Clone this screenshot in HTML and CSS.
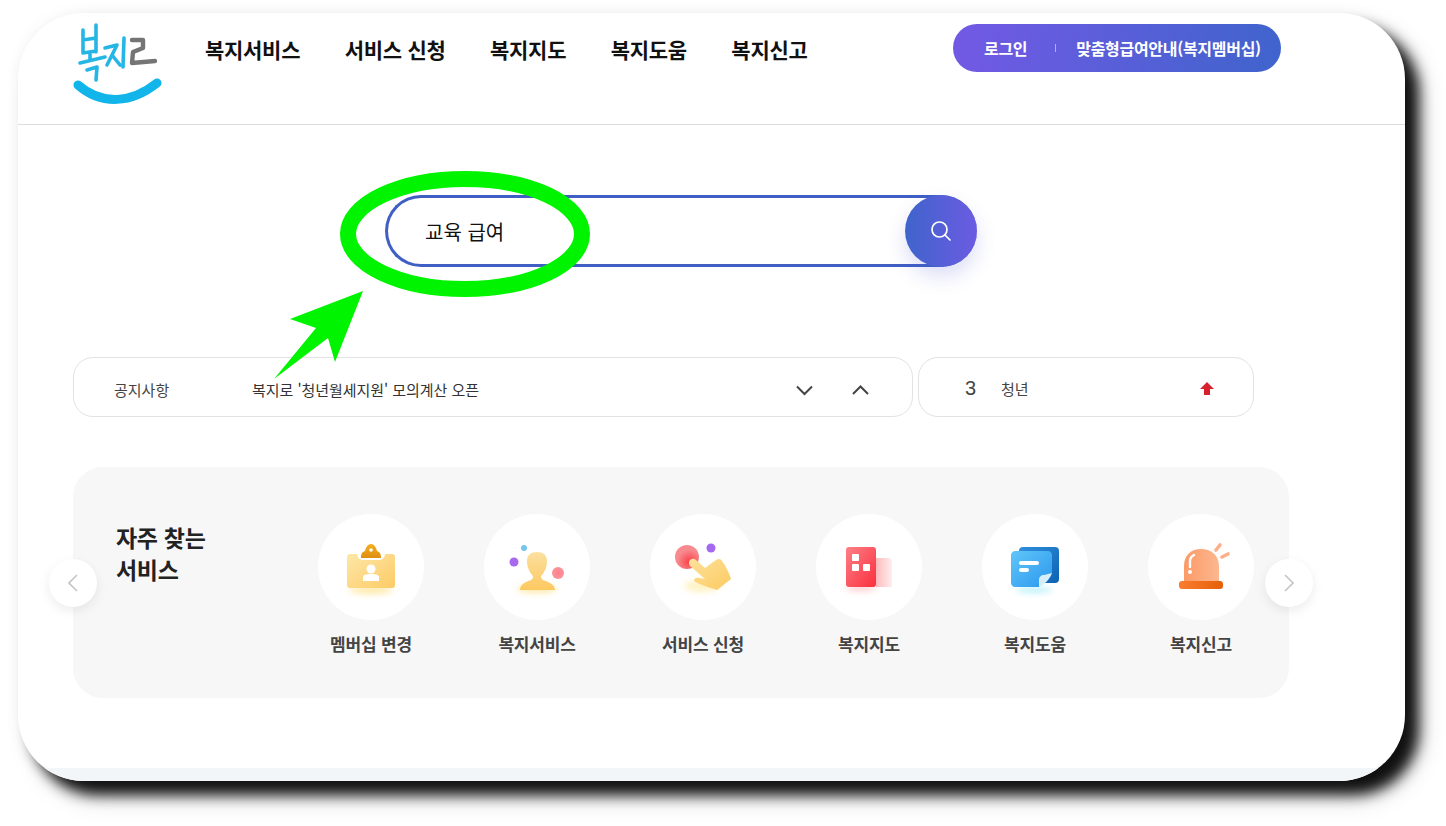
FILE: index.html
```html
<!DOCTYPE html>
<html lang="ko">
<head>
<meta charset="UTF-8">
<meta name="viewport" content="width=device-width, initial-scale=1.0">
<title>복지로</title>
<link rel="stylesheet" href="styles.css">
</head>
<body>
<div class="card">
    <header class="header">
        <a class="logo" href="#">
            <svg width="92" height="82" viewBox="0 0 92 82" fill="none" stroke-linecap="round" stroke-linejoin="round">
                <g stroke="#25b6e6" stroke-width="3.6">
                    <path d="M11 7 L11 30 M24 2 L24 29 M11 17 L24 15 M11 30 L24 28"/>
                    <path d="M18 31 L18 37 M8 40 L33 34 M15 47 L25 44 L24 57"/>
                    <path d="M33 25 L45 22 L35 42 M40 32 L48 42"/>
                    <path d="M52 15 L51 44"/>
                </g>
                <path d="M60 17 L71 17 L71 25 L61 29 L60 40 L83 38" stroke="#757575" stroke-width="4.4"/>
                <path d="M6 62 C30 83 60 80 85 60" stroke="#12b5ea" stroke-width="9"/>
            </svg>
        </a>
        <nav class="nav">
            <a href="#">복지서비스</a>
            <a href="#">서비스 신청</a>
            <a href="#">복지지도</a>
            <a href="#">복지도움</a>
            <a href="#">복지신고</a>
        </nav>
        <div class="member-pill">
            <a href="#">로그인</a>
            <span class="pill-line"></span>
            <a href="#">맞춤형급여안내(복지멤버십)</a>
        </div>
    </header>

    <main class="main">
        <div class="search-row">
            <div class="search-box">
                <span class="search-text">교육 급여</span>
                <button class="search-btn" aria-label="검색">
                    <svg width="22" height="22" viewBox="0 0 22 22" fill="none" stroke="#fff" stroke-width="1.7" stroke-linecap="round">
                        <circle cx="9.5" cy="9.5" r="7.5"/>
                        <path d="M15 15 L20 20"/>
                    </svg>
                </button>
            </div>
        </div>

        <div class="notice-row">
            <div class="notice">
                <span class="notice-label">공지사항</span>
                <span class="notice-text">복지로 '청년월세지원' 모의계산 오픈</span>
                <svg class="notice-arrows" width="76" height="14" viewBox="0 0 76 14" fill="none" stroke="#444" stroke-width="2">
                    <path d="M2 3.5 L9.5 11 L17 3.5"/>
                    <path d="M58 11 L65.5 3.5 L73 11"/>
                </svg>
            </div>
            <div class="rank">
                <span class="rank-num">3</span>
                <span class="rank-word">청년</span>
                <svg class="rank-up" width="14" height="13" viewBox="0 0 14 13">
                    <path d="M7 0 L14 7 L10 7 L10 13 L4 13 L4 7 L0 7 Z" fill="#d9202e"/>
                </svg>
            </div>
        </div>

        <section class="services">
            <h2 class="services-title">자주 찾는<br>서비스</h2>
            <ul class="service-list">
                <li class="service">
                    <span class="service-icon">
                        <svg width="106" height="106" viewBox="0 0 106 106">
                            <defs>
                                <linearGradient id="y1" x1="0" y1="0" x2="1" y2="1"><stop offset="0" stop-color="#fde7a8"/><stop offset="1" stop-color="#fdcb66"/></linearGradient>
                                <linearGradient id="o1" x1="0" y1="0" x2="0" y2="1"><stop offset="0" stop-color="#f3b01e"/><stop offset="1" stop-color="#de8d12"/></linearGradient>
                            </defs>
                            <ellipse class="glow" cx="53" cy="76" rx="22" ry="4" fill="#ffe9a6"/>
                            <rect x="29" y="40" width="48" height="34" rx="3" fill="url(#y1)"/>
                            <path d="M39 39 C39 44 42 46 45 46 L61 46 C64 46 67 44 67 39 Z" fill="#fff"/>
                            <path d="M43 44 C43 40 44 38 47 37 C48 33 50 30 53 30 C56 30 58 33 59 37 C62 38 63 40 63 44 Z" fill="url(#o1)"/>
                            <circle cx="53" cy="36" r="1.8" fill="#fff"/>
                            <circle cx="53" cy="55" r="4.5" fill="#fff"/>
                            <path d="M45 67 L45 63 C45 61 48 60 53 60 C58 60 61 61 61 63 L61 67 Z" fill="#fff"/>
                        </svg>
                    </span>
                    <span class="service-name">멤버십 변경</span>
                </li>
                <li class="service">
                    <span class="service-icon">
                        <svg width="106" height="106" viewBox="0 0 106 106">
                            <defs>
                                <linearGradient id="y2" x1="0" y1="0" x2="0" y2="1"><stop offset="0" stop-color="#fbe09f"/><stop offset="1" stop-color="#fdc860"/></linearGradient>
                                <radialGradient id="r2"><stop offset="0" stop-color="#ff7f8b"/><stop offset="1" stop-color="#f9949c"/></radialGradient>
                            </defs>
                            <ellipse class="glow" cx="53" cy="75" rx="20" ry="4" fill="#ffe9a6"/>
                            <path d="M36 76 C36 70 42 68 47 66 C49 65 49 63 49 62 C45 58 43 52 43 47 C43 41 47 38 53 38 C59 38 63 41 63 47 C63 52 61 58 57 62 C57 63 57 65 59 66 C64 68 71 70 71 76 Z" fill="url(#y2)"/>
                            <circle cx="30" cy="48" r="4.5" fill="#a869ee"/>
                            <circle cx="40" cy="34" r="3" fill="#74c6ec"/>
                            <circle cx="74" cy="59" r="6" fill="url(#r2)"/>
                        </svg>
                    </span>
                    <span class="service-name">복지서비스</span>
                </li>
                <li class="service">
                    <span class="service-icon">
                        <svg width="106" height="106" viewBox="0 0 106 106">
                            <defs>
                                <radialGradient id="r3" cx="0.6" cy="0.7"><stop offset="0" stop-color="#fb3f48"/><stop offset="1" stop-color="#f68a8e"/></radialGradient>
                                <linearGradient id="y3" x1="0" y1="0" x2="1" y2="1"><stop offset="0" stop-color="#fde09a"/><stop offset="1" stop-color="#fccb62"/></linearGradient>
                            </defs>
                            <ellipse class="glow" cx="52" cy="72" rx="18" ry="6" fill="#fff2c4"/>
                            <circle cx="37" cy="43" r="12" fill="url(#r3)"/>
                            <circle cx="61" cy="34" r="4.5" fill="#a468f2"/>
                            <path d="M39 48 C40 44 44 44 46 46 L55 54 L66 46 C69 44 71 45 72 47 C76 52 79 59 81 65 L67 76 C60 74 52 71 45 68 C43 66 45 63 49 64 L55 65 L40 52 C39 51 39 49 39 48 Z" fill="url(#y3)"/>
                        </svg>
                    </span>
                    <span class="service-name">서비스 신청</span>
                </li>
                <li class="service">
                    <span class="service-icon">
                        <svg width="106" height="106" viewBox="0 0 106 106">
                            <defs>
                                <linearGradient id="r4" x1="0" y1="0" x2="1" y2="1"><stop offset="0" stop-color="#fb8087"/><stop offset="1" stop-color="#fb2f3d"/></linearGradient>
                                <linearGradient id="p4" x1="0" y1="0" x2="1" y2="0"><stop offset="0" stop-color="#fdbabd"/><stop offset="1" stop-color="#ffeeee"/></linearGradient>
                            </defs>
                            <ellipse class="glow" cx="45" cy="74" rx="15" ry="3" fill="#ffc9cc"/>
                            <path d="M60 44 L72 44 C75 44 76 46 76 48 L76 73 L60 73 Z" fill="url(#p4)"/>
                            <rect x="30" y="33" width="30" height="40" rx="3" fill="url(#r4)"/>
                            <rect x="36" y="40" width="7" height="7" rx="1" fill="#fff"/>
                            <rect x="36" y="50" width="7" height="7" rx="1" fill="#fff"/>
                            <rect x="47" y="50" width="7" height="7" rx="1" fill="#fff"/>
                        </svg>
                    </span>
                    <span class="service-name">복지지도</span>
                </li>
                <li class="service">
                    <span class="service-icon">
                        <svg width="106" height="106" viewBox="0 0 106 106">
                            <defs>
                                <linearGradient id="b5" x1="0" y1="0" x2="1" y2="1"><stop offset="0" stop-color="#62c6f9"/><stop offset="1" stop-color="#2a97ee"/></linearGradient>
                                <linearGradient id="d5" x1="0" y1="0" x2="1" y2="1"><stop offset="0" stop-color="#2e8fdc"/><stop offset="1" stop-color="#0e62b3"/></linearGradient>
                            </defs>
                            <ellipse class="glow" cx="52" cy="76" rx="18" ry="3" fill="#b9f0f8"/>
                            <rect x="37" y="33" width="40" height="36" rx="4" fill="url(#d5)"/>
                            <path d="M33 37 L66 37 C68 37 70 39 70 41 L70 59 L57 73 L33 73 C31 73 29 71 29 69 L29 41 C29 39 31 37 33 37 Z" fill="url(#b5)"/>
                            <path d="M57 73 L57 66 C57 63 59 61 62 61 L70 59 C68 65 63 70 57 73 Z" fill="#d6eefa"/>
                            <rect x="37" y="47" width="20" height="4" rx="2" fill="#fff"/>
                            <rect x="37" y="54" width="10" height="4" rx="2" fill="#fff"/>
                        </svg>
                    </span>
                    <span class="service-name">복지도움</span>
                </li>
                <li class="service">
                    <span class="service-icon">
                        <svg width="106" height="106" viewBox="0 0 106 106">
                            <defs>
                                <linearGradient id="o6" x1="0" y1="0" x2="1" y2="0"><stop offset="0" stop-color="#fc9a68"/><stop offset="1" stop-color="#fdb78f"/></linearGradient>
                                <linearGradient id="d6" x1="0" y1="0" x2="1" y2="0"><stop offset="0" stop-color="#fa7d30"/><stop offset="1" stop-color="#e65f08"/></linearGradient>
                            </defs>
                            <path d="M36 68 L36 52 C36 41 43 35 53 35 C63 35 71 41 71 52 L71 68 Z" fill="url(#o6)"/>
                            <rect x="31" y="67" width="44" height="8" rx="3" fill="url(#d6)"/>
                            <path d="M42 53 L42 47 C42 44 44 42 46 41" stroke="#fff" stroke-width="2.4" stroke-linecap="round" fill="none"/>
                            <circle cx="42" cy="58" r="2" fill="#fff"/>
                            <path d="M68 36 L72 31 M74 43 L80 40" stroke="#fcb08a" stroke-width="3.6" stroke-linecap="round"/>
                        </svg>
                    </span>
                    <span class="service-name">복지신고</span>
                </li>
            </ul>
            <button class="slide-btn slide-prev" aria-label="이전">
                <svg width="10" height="18" viewBox="0 0 10 18" fill="none" stroke="#c4c4c4" stroke-width="1.6"><path d="M9 1 L1 9 L9 17"/></svg>
            </button>
            <button class="slide-btn slide-next" aria-label="다음">
                <svg width="10" height="18" viewBox="0 0 10 18" fill="none" stroke="#c4c4c4" stroke-width="1.6"><path d="M1 1 L9 9 L1 17"/></svg>
            </button>
        </section>
    </main>

    <div class="bottom-band"></div>

    <!-- green marker drawn over the screenshot -->
    <svg class="marker" width="260" height="215" viewBox="0 0 260 215" fill="none">
        <ellipse cx="125" cy="62" rx="117" ry="55" stroke="#00f400" stroke-width="16"/>
        <path d="M23 119 L-50 147 L-24 156 L-66 207 L-12 166 L-5 190 Z" fill="#00f400"/>
    </svg>
</div>
</body>
</html>
```

FILE: styles.css
```css
* {
    box-sizing: border-box;
}

html, body {
    height: 100%;
}

body {
    margin: 0;
    padding: 13px 41px 45px 18px;
    background: #fff;
    font-family: "Noto Sans CJK KR", "Noto Sans", sans-serif;
    color: #222;
    overflow: hidden;
}

a {
    color: inherit;
    text-decoration: none;
}

.card {
    position: relative;
    display: flex;
    flex-direction: column;
    height: 768px;
    background: #fff;
    border-radius: 66px;
    box-shadow: 14px 14px 14px rgba(0, 0, 0, 0.92), 16px 16px 26px rgba(0, 0, 0, 0.18), 0 0 16px rgba(0, 0, 0, 0.05);
    overflow: hidden;
}

.header {
    display: flex;
    align-items: flex-start;
    height: 112px;
    padding: 10px 124px 0 54px;
    border-bottom: 1px solid #dcdcdc;
}

.logo {
    display: block;
    width: 92px;
    height: 82px;
    margin-right: 41px;
}

.nav {
    display: flex;
    gap: 44.5px;
    margin-top: 10px;
    font-size: 21px;
    font-weight: 700;
    line-height: 32px;
    letter-spacing: -0.28px;
    color: #111;
}

.member-pill {
    display: flex;
    align-items: center;
    height: 48px;
    width: 328px;
    margin: 1px 0 0 auto;
    padding-left: 31px;
    border-radius: 24px;
    background: linear-gradient(100deg, #7359e5, #3f64cc);
    color: #fff;
    font-size: 16px;
    font-weight: 700;
    letter-spacing: -0.3px;
    white-space: nowrap;
}

.pill-line {
    width: 1px;
    height: 8px;
    margin: 0 20px 0 28px;
    background: rgba(255, 255, 255, 0.5);
}

.main {
    flex: 1;
    padding: 70px 116px 0 55px;
}

.search-row {
    padding-left: 312px;
}

.search-box {
    display: flex;
    align-items: center;
    justify-content: space-between;
    width: 592px;
    height: 72px;
    border: 3px solid #3f5fc5;
    border-right: 0;
    border-radius: 36px;
    padding-left: 37px;
}

.search-text {
    font-size: 20px;
    font-weight: 400;
    color: #111;
}

.search-btn {
    display: flex;
    align-items: center;
    justify-content: center;
    width: 72px;
    height: 72px;
    margin: -3px 0;
    padding: 0;
    border: 0;
    border-radius: 50%;
    background: linear-gradient(90deg, #3f64cc, #6c5be2);
    box-shadow: 0 10px 20px rgba(80, 90, 210, 0.2);
}

.notice-row {
    display: flex;
    gap: 5px;
    margin-top: 90px;
}

.notice, .rank {
    display: flex;
    align-items: center;
    height: 60px;
    border: 1px solid #e2e2e2;
    border-radius: 20px;
    background: #fff;
    font-size: 15px;
    color: #444;
}

.notice {
    width: 840px;
    padding: 5px 41px 0 40px;
}

.notice-label {
    width: 138px;
}

.notice-text {
    flex: 1;
    letter-spacing: -0.05px;
    color: #333;
}

.rank {
    width: 336px;
    padding: 2px 39px 0 46px;
}

.rank-num {
    width: 36px;
    font-family: "Liberation Sans", Arial, sans-serif;
    font-size: 20px;
}

.rank-word {
    flex: 1;
}

.services {
    position: relative;
    display: flex;
    width: 1216px;
    height: 231px;
    margin-top: 50px;
    padding: 47px 35px 0 43px;
    background: #f7f7f8;
    border-radius: 30px;
}

.services-title {
    width: 202px;
    margin: 7px 0 0;
    font-size: 23px;
    font-weight: 700;
    line-height: 32px;
    letter-spacing: -0.3px;
    color: #222;
}

.service-list {
    display: flex;
    gap: 60px;
    margin: 0;
    padding: 0;
    list-style: none;
}

.service {
    display: flex;
    flex-direction: column;
    align-items: center;
    width: 106px;
}

.service-icon {
    display: block;
    width: 106px;
    height: 106px;
    border-radius: 50%;
    background: #fff;
}

.service-icon svg {
    display: block;
}

.glow {
    filter: blur(3px);
}

.service-name {
    margin-top: 11px;
    font-size: 17px;
    font-weight: 700;
    line-height: 26px;
    letter-spacing: -0.2px;
    white-space: nowrap;
    color: #444;
}

.slide-btn {
    position: absolute;
    top: 92px;
    display: flex;
    align-items: center;
    justify-content: center;
    width: 48px;
    height: 48px;
    padding: 0;
    border: 0;
    border-radius: 50%;
    background: #fff;
    box-shadow: 0 4px 12px rgba(0, 0, 0, 0.08);
}

.slide-prev {
    left: -24px;
}

.slide-next {
    right: -24px;
}

.bottom-band {
    height: 13px;
    background: #f3f6f8;
}

.marker {
    position: absolute;
    left: 322px;
    top: 159px;
    overflow: visible;
    pointer-events: none;
}
```
